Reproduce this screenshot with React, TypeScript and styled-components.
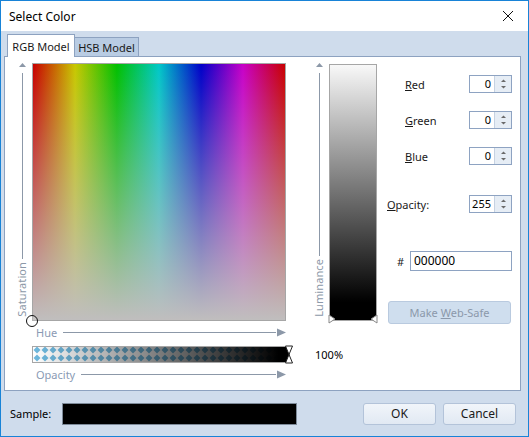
import React from "react";
import styled, { createGlobalStyle } from "styled-components";

const GlobalStyle = createGlobalStyle`
  html, body {
    margin: 0;
    padding: 0;
    background: #ffffff;
  }
  body {
    font-family: "Noto Sans", "Open Sans", sans-serif;
    font-size: 11px;
    color: #000;
  }
`;

const AXIS = "#8c98a8";
const AXIS_TEXT = "#8a9ab4";

const Window = styled.div`
  width: 529px;
  height: 437px;
  box-sizing: border-box;
  border: 1px solid #1883d7;
  display: flex;
  flex-direction: column;
  background: #cfdcec;
  overflow: hidden;
`;

const TitleBar = styled.div`
  height: 30px;
  flex: none;
  background: #ffffff;
  display: flex;
  align-items: center;
  justify-content: space-between;
  padding: 0 14px 0 8px;
  font-size: 12px;
`;

const TabStrip = styled.div`
  height: 25px;
  flex: none;
  display: flex;
  align-items: flex-end;
  padding-left: 6px;
`;

type TabProps = { $active?: boolean };

const Tab = styled.div<TabProps>`
  box-sizing: border-box;
  height: ${(p) => (p.$active ? "23px" : "19px")};
  width: ${(p) => (p.$active ? "68px" : "64px")};
  margin-bottom: ${(p) => (p.$active ? "-1px" : "0")};
  background: ${(p) => (p.$active ? "#ffffff" : "#b9cce3")};
  border: 1px solid #8da2c0;
  border-bottom: none;
  border-left: ${(p) => (p.$active ? "1px solid #8da2c0" : "none")};
  position: relative;
  z-index: ${(p) => (p.$active ? 1 : 0)};
  display: flex;
  align-items: center;
  justify-content: center;
  font-size: 11px;
  color: #1a1a1a;
`;

const TabPage = styled.div`
  box-sizing: border-box;
  height: 335px;
  flex: none;
  margin: 0 7px 0 3px;
  border: 1px solid #8da2c0;
  background: #ffffff;
  padding-top: 6px;
  display: grid;
  grid-template-columns: 27px 258px 39px 48px 1fr;
  grid-template-rows: 258px 22px 21px 20px;
`;

const VAxis = styled.div<{ $col: number; $left: number }>`
  grid-column: ${(p) => p.$col};
  grid-row: 1;
  width: 12px;
  margin-left: ${(p) => p.$left}px;
  display: flex;
  flex-direction: column;
  align-items: center;
  padding-bottom: 4px;
  box-sizing: border-box;
`;

const VLine = styled.div`
  width: 1px;
  flex: 1;
  background: ${AXIS};
  margin-bottom: 3px;
`;

const VText = styled.div`
  writing-mode: vertical-rl;
  transform: rotate(180deg);
  color: ${AXIS};
  font-size: 11px;
  line-height: 12px;
  letter-spacing: 0.1px;
`;

const FieldWrap = styled.div`
  grid-column: 2;
  grid-row: 1;
  width: 254px;
  height: 258px;
  position: relative;
`;

const Field = styled.div`
  box-sizing: border-box;
  width: 100%;
  height: 100%;
  border: 1px solid #a6a6a6;
  background: linear-gradient(
      to bottom,
      rgba(192, 190, 190, 0) 0%,
      rgba(192, 190, 190, 1) 100%
    ),
    linear-gradient(
      to right,
      #c80000 0%,
      #c8c800 16.7%,
      #00c000 33.3%,
      #00c8c8 50%,
      #0000c8 66.7%,
      #c800c8 83.3%,
      #c80000 100%
    );
`;

const Marker = styled.div`
  position: absolute;
  left: -6px;
  bottom: -6px;
  width: 10px;
  height: 10px;
  border-radius: 50%;
  border: 1px solid #111;
  background: rgba(255, 255, 255, 0.15);
`;

const HAxis = styled.div<{ $row: number }>`
  grid-column: 2;
  grid-row: ${(p) => p.$row};
  width: 254px;
  display: flex;
  align-items: center;
  padding-left: 4px;
  box-sizing: border-box;
`;

const HLabel = styled.span`
  color: ${AXIS_TEXT};
  font-size: 11px;
  margin-right: 6px;
`;

const HLine = styled.div`
  height: 1px;
  flex: 1;
  background: ${AXIS};
`;

const OpacityBar = styled.div`
  grid-column: 2 / 4;
  grid-row: 3;
  width: 258px;
  height: 17px;
  margin-top: 3px;
  position: relative;
`;

const Percent = styled.div`
  grid-column: 3 / 5;
  grid-row: 3;
  padding: 3px 0 0 25px;
  line-height: 17px;
  font-size: 11px;
`;

const LumWrap = styled.div`
  grid-column: 4;
  grid-row: 1;
  margin-top: 1px;
  height: 257px;
  position: relative;
`;

const LumBar = styled.div`
  box-sizing: border-box;
  height: 100%;
  border: 1px solid #a6a6a6;
  background: linear-gradient(to bottom, #f8f8f8 0%, #000 93%, #000 100%);
`;

const Panel = styled.div`
  grid-column: 5;
  grid-row: 1 / 5;
  padding: 6px 8px 0 10px;
  display: flex;
  flex-direction: column;
`;

const FieldRow = styled.div<{ $gap: number; $indent?: number }>`
  display: flex;
  align-items: center;
  margin-top: ${(p) => p.$gap}px;
  padding-left: ${(p) => p.$indent ?? 0}px;
`;

const Label = styled.span`
  font-size: 11px;
  color: #1a1a1a;
  u {
    text-decoration: underline;
    text-underline-offset: 1px;
  }
`;

const Spinner = styled.div`
  box-sizing: border-box;
  margin-left: auto;
  width: 43px;
  height: 18px;
  border: 1px solid #8ea3c2;
  display: flex;
  background: #fff;
`;

const SpinValue = styled.div`
  flex: 1;
  text-align: right;
  padding-right: 3px;
  font-size: 11px;
  line-height: 16px;
`;

const SpinButtons = styled.div`
  width: 16px;
  border-left: 1px solid #c6d2e2;
  background: #e6edf5;
  display: flex;
  align-items: center;
  justify-content: center;
`;

const HexInput = styled.div`
  box-sizing: border-box;
  margin-left: auto;
  width: 102px;
  height: 20px;
  border: 1px solid #8ea3c2;
  padding-left: 3px;
  font-size: 12px;
  line-height: 18px;
`;

const WebSafe = styled.div`
  box-sizing: border-box;
  margin-top: 30px;
  margin-left: 1px;
  width: 123px;
  height: 23px;
  border: 1px solid #b9cadf;
  border-radius: 3px;
  background: #cfdeee;
  color: #8b98aa;
  display: flex;
  align-items: center;
  justify-content: center;
  font-size: 11px;
  u {
    text-underline-offset: 1px;
  }
`;

const Footer = styled.div`
  flex: 1;
  display: flex;
  align-items: center;
  padding: 0 12px 0 9px;
  font-size: 11px;
`;

const Sample = styled.div`
  box-sizing: border-box;
  width: 235px;
  height: 22px;
  margin-left: 11px;
  background: #000;
  border: 1px solid #7d8a99;
`;

const Button = styled.div<{ $first?: boolean }>`
  box-sizing: border-box;
  width: 73px;
  height: 22px;
  margin-left: ${(p) => (p.$first ? "auto" : "7px")};
  border: 1px solid #b3c3d9;
  border-radius: 3px;
  background: linear-gradient(to bottom, #f1f5fa, #e1e9f3);
  display: flex;
  align-items: center;
  justify-content: center;
  font-size: 12px;
  color: #1a1a1a;
`;

const UpArrow = () => (
  <svg width="9" height="10" viewBox="0 0 9 10">
    <polygon points="4.5,0 8,4 1,4" fill={AXIS} />
  </svg>
);

const RightArrow = () => (
  <svg width="10" height="9" viewBox="0 0 10 9">
    <polygon points="10,4.5 1,0.5 1,8.5" fill={AXIS} />
  </svg>
);

const SpinGlyph = () => (
  <svg width="7" height="12" viewBox="0 0 7 12">
    <polygon points="3.5,1.5 6,4 1,4" fill="#6a6a6a" />
    <polygon points="3.5,10.5 6,8 1,8" fill="#6a6a6a" />
  </svg>
);

const CloseGlyph = () => (
  <svg width="12" height="12" viewBox="0 0 12 12">
    <path d="M1 1 L11 11 M11 1 L1 11" stroke="#111" strokeWidth="1" />
  </svg>
);

const OpacityStrip = () => (
  <svg width="265" height="19" viewBox="0 0 265 19" style={{ position: "absolute", left: 0, top: -1 }}>
    <defs>
      <pattern id="diamonds" width="8" height="8" patternUnits="userSpaceOnUse" x="1" y="1">
        <rect width="8" height="8" fill="#ffffff" />
        <polygon points="4,0.5 7.5,4 4,7.5 0.5,4" fill="#6fb9de" />
      </pattern>
      <linearGradient id="fade" x1="0" x2="1" y1="0" y2="0">
        <stop offset="0" stopColor="#000" stopOpacity="0" />
        <stop offset="0.96" stopColor="#000" stopOpacity="1" />
      </linearGradient>
    </defs>
    <rect x="0.5" y="1.5" width="257" height="16" fill="url(#diamonds)" stroke="#a6a6a6" />
    <rect x="1" y="2" width="256" height="15" fill="url(#fade)" />
    <polygon points="253.5,1 260.5,1 257,9.5 260.5,18 253.5,18 257,9.5" fill="#fff" stroke="#222" strokeWidth="1" />
  </svg>
);

const LumHandles = () => (
  <svg width="50" height="10" viewBox="0 0 50 10" style={{ position: "absolute", left: -1, bottom: -3 }}>
    <polygon points="1,1 7,5 1,9" fill="#fff" stroke="#888" />
    <polygon points="49,1 43,5 49,9" fill="#fff" stroke="#888" />
  </svg>
);

type ChannelProps = { underline: string; rest: string; value: string; gap: number; indent?: number };

const ChannelRow = ({ underline, rest, value, gap, indent }: ChannelProps) => (
  <FieldRow $gap={gap} $indent={indent}>
    <Label>
      <u>{underline}</u>
      {rest}
    </Label>
    <Spinner>
      <SpinValue>{value}</SpinValue>
      <SpinButtons>
        <SpinGlyph />
      </SpinButtons>
    </Spinner>
  </FieldRow>
);

export default function App() {
  return (
    <>
      <GlobalStyle />
      <Window>
        <TitleBar>
          <span>Select Color</span>
          <CloseGlyph />
        </TitleBar>
        <TabStrip>
          <Tab $active>RGB Model</Tab>
          <Tab>HSB Model</Tab>
        </TabStrip>
        <TabPage>
          <VAxis $col={1} $left={11}>
            <UpArrow />
            <VLine />
            <VText>Saturation</VText>
          </VAxis>
          <FieldWrap>
            <Field />
            <Marker />
          </FieldWrap>
          <VAxis $col={3} $left={23}>
            <UpArrow />
            <VLine />
            <VText>Luminance</VText>
          </VAxis>
          <LumWrap>
            <LumBar />
            <LumHandles />
          </LumWrap>
          <Panel>
            <ChannelRow underline="R" rest="ed" value="0" gap={6} indent={18} />
            <ChannelRow underline="G" rest="reen" value="0" gap={18} indent={18} />
            <ChannelRow underline="B" rest="lue" value="0" gap={18} indent={18} />
            <ChannelRow underline="O" rest="pacity:" value="255" gap={30} />
            <FieldRow $gap={38} $indent={10}>
              <Label>#</Label>
              <HexInput>000000</HexInput>
            </FieldRow>
            <WebSafe>
              <span>
                Make <u>W</u>eb-Safe
              </span>
            </WebSafe>
          </Panel>
          <HAxis $row={2}>
            <HLabel>Hue</HLabel>
            <HLine />
            <RightArrow />
          </HAxis>
          <OpacityBar>
            <OpacityStrip />
          </OpacityBar>
          <Percent>100%</Percent>
          <HAxis $row={4}>
            <HLabel>Opacity</HLabel>
            <HLine />
            <RightArrow />
          </HAxis>
        </TabPage>
        <Footer>
          <span>Sample:</span>
          <Sample />
          <Button $first>OK</Button>
          <Button>Cancel</Button>
        </Footer>
      </Window>
    </>
  );
}
